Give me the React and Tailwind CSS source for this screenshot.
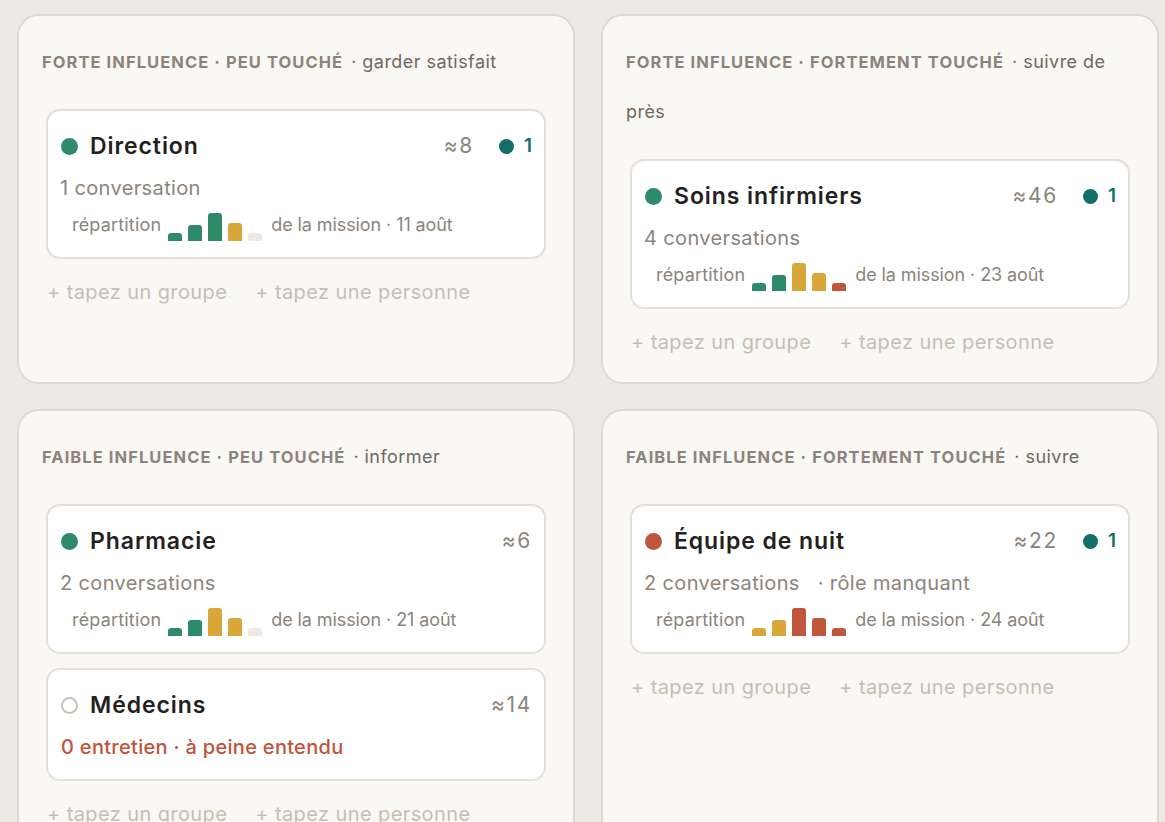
const GREEN = "bg-[#2e8a68]";
const YELLOW = "bg-[#d9a63a]";
const RED = "bg-[#c0563b]";
const LIGHT = "bg-[#eeeae3]";

const heights = ["h-[8px]", "h-[16px]", "h-[28px]", "h-[18px]", "h-[8px]"];

function Bars({ colors }) {
  return (
    <div className="flex h-[28px] items-end gap-[6px]">
      {colors.map((c, i) => (
        <div key={i} className={`w-[14px] rounded-t-[3px] ${heights[i]} ${c}`} />
      ))}
    </div>
  );
}

function Stakeholder({ dot, name, approx, count, sub, extra, bars, date, warning }) {
  return (
    <div
      className={`rounded-[14px] border-2 border-[#e4dfd7] bg-white pl-[13px] pr-[12px] pt-[21px] ${
        warning ? "pb-[19px]" : "pb-[16px]"
      }`}
    >
      <div className="flex h-[28px] items-center">
        {dot === "empty" ? (
          <span className="h-[17px] w-[17px] shrink-0 rounded-full border-2 border-[#c9c2b8]" />
        ) : (
          <span className={`h-[17px] w-[17px] shrink-0 rounded-full ${dot}`} />
        )}
        <span className="ml-[12px] text-[23px] font-semibold tracking-[0.04em] text-[#24201d]">
          {name}
        </span>
        <span className="ml-auto text-[21px] tracking-[0.08em] text-[#8c847b]">≈{approx}</span>
        {count && (
          <span className="ml-[25px] flex items-center gap-[10px] text-[19px] font-semibold text-[#136f66]">
            <span className="h-[15px] w-[15px] rounded-full bg-[#136f66]" />
            {count}
          </span>
        )}
      </div>
      {warning ? (
        <div className="mt-[15px] text-[20px] font-medium leading-[26px] tracking-[0.015em] text-[#c0533a]">
          {warning}
        </div>
      ) : (
        <>
          <div className="mt-[15px] -ml-px text-[20px] leading-[26px] tracking-[0.018em] text-[#8c847b]">
            {sub}
            {extra && <span className="ml-[18px]">{extra}</span>}
          </div>
          <div className="mt-[12px] flex items-center pl-[11px] text-[18px] text-[#8c847b]">
            <span className="-mt-[6px] mr-[7px] tracking-[0.01em]">répartition</span>
            <Bars colors={bars} />
            <span className="-mt-[6px] ml-[9px] tracking-[-0.005em]">de la mission · {date}</span>
          </div>
        </>
      )}
    </div>
  );
}

function Quadrant({ title, hint, children }) {
  return (
    <div className="rounded-[22px] border-2 border-[#dedad2] bg-[#f9f8f5] px-[27px] pt-[21px] pb-[28px]">
      <div className="-ml-[4px] text-[18px] leading-[50px] text-[#6f6860]">
        <span className="align-top text-[16.5px] font-bold tracking-[0.065em] text-[#8c847b]">
          {title}
        </span>
        <span className="ml-[8px] align-top tracking-[0.025em]">· {hint}</span>
      </div>
      <div className="mt-[22px] flex flex-col gap-[14px]">{children}</div>
      <div className="mt-[21px] flex gap-[28px] pl-px text-[20px] leading-[24px] tracking-[0.02em] text-[#c6beb4]">
        <span>+ tapez un groupe</span>
        <span>+ tapez une personne</span>
      </div>
    </div>
  );
}

export default function App() {
  return (
    <div
      className="min-h-screen overflow-hidden bg-[#ede9e3] pt-[14px] pl-[17px] pr-[6px]"
      style={{ fontFamily: "Inter, 'Noto Sans', sans-serif" }}
    >
      <div className="grid grid-cols-2 gap-x-[26px] gap-y-[25px]">
        <Quadrant title="FORTE INFLUENCE · PEU TOUCHÉ" hint="garder satisfait">
          <Stakeholder
            dot={GREEN}
            name="Direction"
            approx="8"
            count="1"
            sub="1 conversation"
            bars={[GREEN, GREEN, GREEN, YELLOW, LIGHT]}
            date="11 août"
          />
        </Quadrant>
        <Quadrant title="FORTE INFLUENCE · FORTEMENT TOUCHÉ" hint="suivre de près">
          <Stakeholder
            dot={GREEN}
            name="Soins infirmiers"
            approx="46"
            count="1"
            sub="4 conversations"
            bars={[GREEN, GREEN, YELLOW, YELLOW, RED]}
            date="23 août"
          />
        </Quadrant>
        <Quadrant title="FAIBLE INFLUENCE · PEU TOUCHÉ" hint="informer">
          <Stakeholder
            dot={GREEN}
            name="Pharmacie"
            approx="6"
            sub="2 conversations"
            bars={[GREEN, GREEN, YELLOW, YELLOW, LIGHT]}
            date="21 août"
          />
          <Stakeholder
            dot="empty"
            name="Médecins"
            approx="14"
            warning="0 entretien · à peine entendu"
          />
        </Quadrant>
        <Quadrant title="FAIBLE INFLUENCE · FORTEMENT TOUCHÉ" hint="suivre">
          <Stakeholder
            dot={RED}
            name="Équipe de nuit"
            approx="22"
            count="1"
            sub="2 conversations"
            extra="· rôle manquant"
            bars={[YELLOW, YELLOW, RED, RED, RED]}
            date="24 août"
          />
        </Quadrant>
      </div>
    </div>
  );
}
